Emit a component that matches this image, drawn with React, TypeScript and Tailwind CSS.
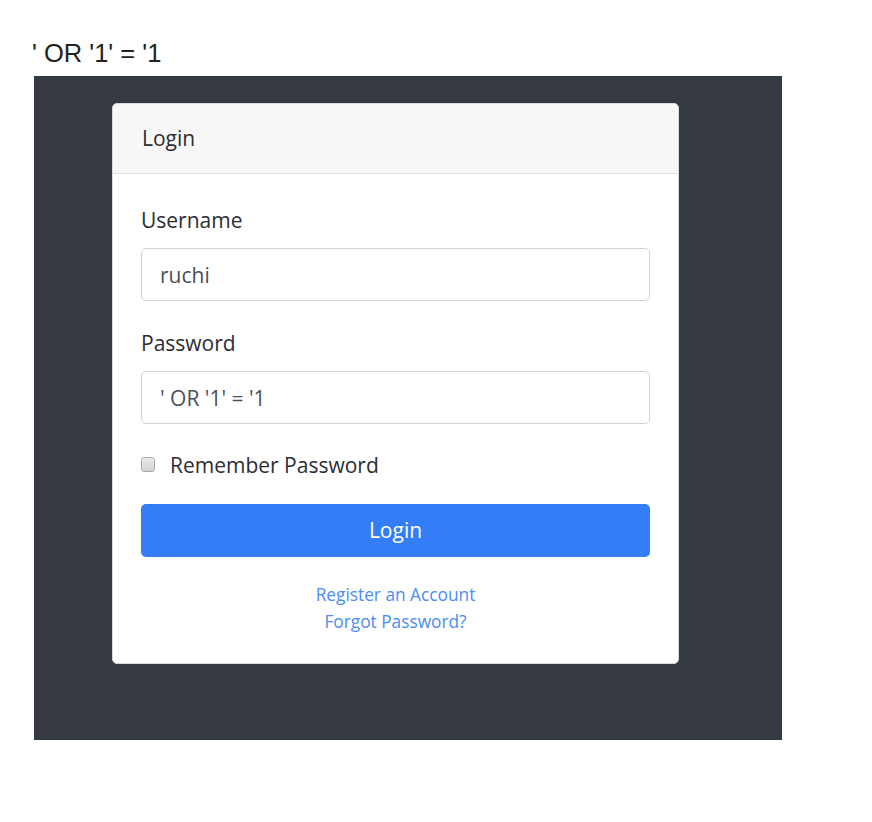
import React from "react";

const App = () => {
  return (
    <div className="min-h-screen bg-white pt-[36px]">
      <h1 className="pl-[32px] text-[25.5px] leading-[34px] text-[#222] font-['Liberation_Sans',Arial,sans-serif]">
        ' OR '1' = '1
      </h1>
      <section className="ml-[34px] mt-[6px] w-[748px] h-[664px] bg-[#343a40] pt-[27px] pl-[78px] font-['Open_Sans',sans-serif]">
        <div className="w-[567px] bg-white rounded-[5px] border border-[#d9d9d9] overflow-hidden">
          <div className="h-[70px] bg-[#f7f7f7] border-b border-[#dfdfdf] pl-[29px] flex items-center">
            <h3 className="text-[21px] text-[#2a2e33]">Login</h3>
          </div>
          <form className="px-[28px] pt-[31px] pb-[28px] flex flex-col">
            <label className="text-[21px] leading-[30px] text-[#2a2e33]">Username</label>
            <input
              className="mt-[13px] h-[53px] rounded-[5px] border border-[#ced4da] px-[18px] text-[21px] text-[#495057] outline-none"
              defaultValue="ruchi"
            />
            <label className="mt-[27px] text-[21px] leading-[30px] text-[#2a2e33]">Password</label>
            <input
              className="mt-[13px] h-[53px] rounded-[5px] border border-[#ced4da] px-[18px] text-[21px] text-[#495057] outline-none"
              defaultValue="' OR '1' = '1"
            />
            <div className="mt-[27px] h-[30px] flex items-center gap-[15px]">
              <span className="w-[14px] h-[15px] -mt-[4px] rounded-[3px] border border-[#a9a9a9] bg-gradient-to-b from-[#e9e9e9] to-[#d4d4d4]"></span>
              <span className="text-[21px] text-[#2a2e33]">Remember Password</span>
            </div>
            <button
              type="button"
              className="mt-[23px] h-[53px] rounded-[5px] bg-[#337ef6] text-white text-[21px]"
            >
              Login
            </button>
            <div className="mt-[24px] flex flex-col items-center text-[17.3px] leading-[27px] text-[#4b8cf5]">
              <a href="#">Register an Account</a>
              <a href="#">Forgot Password?</a>
            </div>
          </form>
        </div>
      </section>
    </div>
  );
};

export default App;
